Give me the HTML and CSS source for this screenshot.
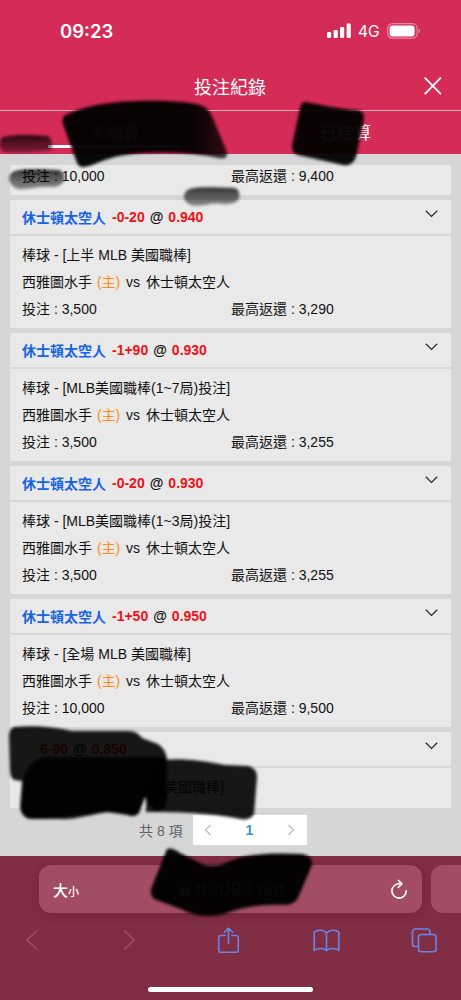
FILE: index.html
```
<!DOCTYPE html>
<html lang="zh-Hant">
<head>
    <meta charset="UTF-8">
    <meta name="viewport" content="width=device-width, initial-scale=1.0">
    <title>投注紀錄</title>
    <link rel="stylesheet" href="styles.css">
</head>
<body>
<div class="phone">
    <div class="status-bar">
        <span class="time">09:23</span>
        <div class="status-icons">
            <svg width="25" height="16" viewBox="0 0 25 16" fill="#fff">
                <rect x="0" y="9" width="4.2" height="6" rx="1.2"/>
                <rect x="6.6" y="7" width="4.2" height="8" rx="1.2"/>
                <rect x="13" y="4" width="4.2" height="11" rx="1.2"/>
                <rect x="19.6" y="0.5" width="4.2" height="14.5" rx="1.2"/>
            </svg>
            <span class="network">4G</span>
            <svg width="34" height="16" viewBox="0 0 34 16">
                <rect x="0.7" y="0.7" width="29.4" height="14.4" rx="4.6" fill="none" stroke="#fff" stroke-opacity="0.45" stroke-width="1.2"/>
                <rect x="2.6" y="2.6" width="25" height="10.8" rx="3" fill="#fff"/>
                <path d="M31.6 5.5c1.8.8 1.8 4 0 4.8z" fill="#fff" fill-opacity="0.5"/>
            </svg>
        </div>
    </div>

    <div class="header">
        <h1>投注紀錄</h1>
        <svg class="close" width="18" height="18" viewBox="0 0 18 18" stroke="#fff" stroke-width="1.8" stroke-linecap="round">
            <path d="M1.2 1.2L16.4 16.6M16.4 1.2L1.2 16.6"/>
        </svg>
    </div>

    <div class="tabs">
        <div class="tab active">未結算</div>
        <div class="tab">已結算</div>
    </div>

    <div class="content">
        <div class="card first">
            <div class="row"><span>投注 : 10,000</span><span>最高返還 : 9,400</span></div>
        </div>

        <div class="card">
            <div class="card-title"><b class="team">休士頓太空人</b><b class="red">-0-20</b><b class="at">@</b><b class="red">0.940</b>
                <svg class="chevron" width="13" height="8" viewBox="0 0 13 8"><path d="M0.8 0.8L6.5 6.4L12.2 0.8"/></svg>
            </div>
            <div class="card-body">
                <div class="row">棒球 - [上半 MLB 美國職棒]</div>
                <div class="row match">西雅圖水手 <span class="home">(主)</span> vs <span class="away">休士頓太空人</span></div>
                <div class="row"><span>投注 : 3,500</span><span>最高返還 : 3,290</span></div>
            </div>
        </div>

        <div class="card">
            <div class="card-title"><b class="team">休士頓太空人</b><b class="red">-1+90</b><b class="at">@</b><b class="red">0.930</b>
                <svg class="chevron" width="13" height="8" viewBox="0 0 13 8"><path d="M0.8 0.8L6.5 6.4L12.2 0.8"/></svg>
            </div>
            <div class="card-body">
                <div class="row">棒球 - [MLB美國職棒(1~7局)投注]</div>
                <div class="row match">西雅圖水手 <span class="home">(主)</span> vs <span class="away">休士頓太空人</span></div>
                <div class="row"><span>投注 : 3,500</span><span>最高返還 : 3,255</span></div>
            </div>
        </div>

        <div class="card">
            <div class="card-title"><b class="team">休士頓太空人</b><b class="red">-0-20</b><b class="at">@</b><b class="red">0.930</b>
                <svg class="chevron" width="13" height="8" viewBox="0 0 13 8"><path d="M0.8 0.8L6.5 6.4L12.2 0.8"/></svg>
            </div>
            <div class="card-body">
                <div class="row">棒球 - [MLB美國職棒(1~3局)投注]</div>
                <div class="row match">西雅圖水手 <span class="home">(主)</span> vs <span class="away">休士頓太空人</span></div>
                <div class="row"><span>投注 : 3,500</span><span>最高返還 : 3,255</span></div>
            </div>
        </div>

        <div class="card">
            <div class="card-title"><b class="team">休士頓太空人</b><b class="red">-1+50</b><b class="at">@</b><b class="red">0.950</b>
                <svg class="chevron" width="13" height="8" viewBox="0 0 13 8"><path d="M0.8 0.8L6.5 6.4L12.2 0.8"/></svg>
            </div>
            <div class="card-body">
                <div class="row">棒球 - [全場 MLB 美國職棒]</div>
                <div class="row match">西雅圖水手 <span class="home">(主)</span> vs <span class="away">休士頓太空人</span></div>
                <div class="row"><span>投注 : 10,000</span><span>最高返還 : 9,500</span></div>
            </div>
        </div>

        <div class="card last">
            <div class="card-title hidden-title"><b class="red">6-90</b><b class="at">@</b><b class="red">0.850</b>
                <svg class="chevron" width="13" height="8" viewBox="0 0 13 8"><path d="M0.8 0.8L6.5 6.4L12.2 0.8"/></svg>
            </div>
            <div class="card-body">
                <div class="row hidden-row">美國職棒]</div>
            </div>
        </div>

        <div class="pagination">
            <span class="total">共 8 項</span>
            <div class="pager">
                <svg width="8" height="12" viewBox="0 0 8 12"><path d="M6.5 1L1.5 6L6.5 11"/></svg>
                <span class="page">1</span>
                <svg width="8" height="12" viewBox="0 0 8 12"><path d="M1.5 1L6.5 6L1.5 11"/></svg>
            </div>
        </div>
    </div>

    <div class="browser-bar">
        <div class="address-row">
            <div class="address">
                <span class="text-size">大<small>小</small></span>
                <span class="url">
                    <svg width="10" height="13" viewBox="0 0 10 13"><rect x="0" y="5" width="10" height="8" rx="1.5" fill="#fff"/><path d="M2.2 5V3.4a2.8 2.8 0 0 1 5.6 0V5" fill="none" stroke="#fff" stroke-width="1.3"/></svg>
                    tf9099.net
                </span>
                <svg class="reload" width="18" height="21" viewBox="0 0 18 21" fill="none" stroke="#fff" stroke-width="1.6" stroke-linecap="round" stroke-linejoin="round">
                    <path d="M9.6 4.7A7.2 7.2 0 1 0 16.3 11.9"/>
                    <path d="M8.3 1.3L12 4.8L8.3 8.4"/>
                </svg>
            </div>
            <div class="next-address"></div>
        </div>
        <div class="toolbar">
            <svg class="off" height="20" viewBox="0 0 12 20"><path d="M11 1L1.2 10L11 19"/></svg>
            <svg class="off" height="20" viewBox="0 0 12 20"><path d="M1 1L10.8 10L1 19"/></svg>
            <svg height="27" viewBox="0 0 22 27">
                <path d="M7.5 8.5H3.5a2.3 2.3 0 0 0-2.3 2.3V23a2.3 2.3 0 0 0 2.3 2.3h15a2.3 2.3 0 0 0 2.3-2.3V10.8a2.3 2.3 0 0 0-2.3-2.3H14.5M11 16.5V1.2M6.8 5.3L11 1.2L15.2 5.3"/>
            </svg>
            <svg height="23" viewBox="0 0 27 23">
                <path d="M13.5 4C11 .8 4.5.3 1.2 3.2V21.5C4.5 18.8 11 18.8 13.5 21.5C16 18.8 22.5 18.8 25.8 21.5V3.2C22.5.3 16 .8 13.5 4zM13.5 4V21.5"/>
            </svg>
            <svg height="25" viewBox="0 0 26 25">
                <path d="M7 18.5H3.5a2.5 2.5 0 0 1-2.5-2.5V3.5A2.5 2.5 0 0 1 3.5 1h12.5a2.5 2.5 0 0 1 2.5 2.5V6.5"/>
                <rect x="7" y="6.5" width="17.5" height="17.3" rx="2.5"/>
            </svg>
        </div>
        <div class="home-indicator"></div>
    </div>

    <!-- marker strokes -->
    <svg class="marker" width="461" height="1000" viewBox="0 0 461 1000">
        <defs>
            <filter id="soft" x="-10%" y="-10%" width="120%" height="120%"><feGaussianBlur stdDeviation="1.5"/></filter>
            <linearGradient id="pen" x1="0" y1="0" x2="0" y2="1">
                <stop offset="0" stop-color="#000" stop-opacity="0.8"/>
                <stop offset="0.5" stop-color="#000" stop-opacity="0.58"/>
                <stop offset="1" stop-color="#000" stop-opacity="0.42"/>
            </linearGradient>
            <linearGradient id="fade" x1="0" y1="0" x2="1" y2="0">
                <stop offset="0" stop-color="#000" stop-opacity="0.96"/>
                <stop offset="0.8" stop-color="#000" stop-opacity="0.96"/>
                <stop offset="1" stop-color="#000" stop-opacity="0.75"/>
            </linearGradient>
        </defs>
        <g filter="url(#soft)">
            <path fill="url(#fade)" d="M64 116C80 107 105 102 137 101C165 100 188 102 200 105Q209 108 212 116L227 152Q228 160 219 158C190 152 155 151 125 155C105 158 93 166 84 167Q78 168 76 160L63 124Q62 119 64 116z"/>
            <path fill="#000" fill-opacity="0.95" d="M305 102C320 104 336 109 357 110Q365 111 364 119L356 157Q352 167 343 165L298 155Q292 153 292 146L300 108Q301 102 305 102z"/>
            <path fill="url(#pen)" d="M2 137C18 134 34 135 48 136Q53 139 52 150C38 152 18 153 4 152Q-4 146 2 137z"/>
            <path fill="url(#pen)" d="M15 171C28 168 48 170 59 170Q66 173 64 181Q60 187 52 187C38 186 27 190 18 189Q11 187 9 179Q10 172 15 171z"/>
            <path fill="url(#pen)" d="M190 189C200 186 222 188 235 188Q241 191 239 199Q235 205 222 204C210 202 200 208 191 205Q183 202 184 195Q186 190 190 189z"/>
            <path fill="#000" fill-opacity="0.9" d="M14 727C32 725 55 727 72 731H130Q138 732 142 738L158 744Q167 750 167 761V800Q166 812 156 811L145 797L139 813Q135 818 127 815L108 812C88 815 75 820 58 819H30Q21 817 20 807L22 781L14 780Q10 777 10 770L9 735Q10 728 14 727z"/>
            <path fill="#000" fill-opacity="0.9" d="M44 757H165V785L154 811L145 797L139 813Q135 817 127 814L106 812L50 818H29Q22 816 21 807L24 778Q29 760 44 757z"/>
            <path fill="#000" fill-opacity="0.9" d="M160 760C180 758 200 760 225 765L248 766Q257 768 257 777L254 814Q250 821 240 819C215 814 198 813 165 812H146V785z"/>
            <path fill="#000" fill-opacity="0.97" d="M167 849Q172 847 180 853L202 864Q215 868 228 862C248 853 275 853 302 854Q313 856 312 865L298 898Q294 905 285 905C265 904 240 907 225 914Q200 920 181 909L154 899Q150 895 151 889z"/>
        </g>
    </svg>
</div>
</body>
</html>
```

FILE: styles.css
```
* {
    box-sizing: border-box;
}

body {
    margin: 0;
    font-family: "Liberation Sans", "Noto Sans CJK TC", sans-serif;
    font-size: 14px;
    color: #111;
}

.phone {
    position: relative;
    width: 461px;
    height: 1000px;
    overflow: hidden;
    display: flex;
    flex-direction: column;
    background-color: #d6d6d6;
}

svg {
    display: block;
    flex-shrink: 0;
}

/* status bar */
.status-bar {
    height: 62px;
    padding: 0 40px 0 60px;
    display: flex;
    align-items: center;
    justify-content: space-between;
    background-color: #d52b57;
    color: #fff;
}

.time {
    font-family: Inter, sans-serif;
    font-size: 18.5px;
    font-weight: 600;
}

.status-icons {
    display: flex;
    align-items: center;
}

.network {
    width: 35px;
    padding-left: 6px;
    font-family: Inter, sans-serif;
    font-size: 15.5px;
}

/* header */
.header {
    height: 49px;
    padding: 0 19px 0 194px;
    display: flex;
    align-items: center;
    justify-content: space-between;
    background-color: #d52b57;
    border-bottom: 1px solid #f3a9bd;
    color: #fff;
}

.header h1 {
    margin: 0;
    font-size: 18px;
    font-weight: normal;
}

.tabs {
    height: 43px;
    display: flex;
    background-color: #d52b57;
    color: #fff;
    font-size: 17px;
}

.tab {
    width: 50%;
    display: flex;
    align-items: center;
    justify-content: center;
    border-bottom: 2px solid #d52b57;
}

.tab.active::after {
    content: "";
    position: absolute;
    top: 145px;
    left: 48px;
    width: 135px;
    height: 3px;
    background-color: #fff;
}

/* bet list */
.content {
    height: 702px;
    padding: 11px 10px 0 10px;
}

.card {
    height: 128px;
    margin-bottom: 5px;
    background-color: #e9e9e9;
}

.card.first {
    height: 30px;
    padding-left: 12px;
}

.card.last {
    height: 76px;
    margin-bottom: 0;
}

.card-title {
    height: 36px;
    padding: 0 13px 0 12px;
    display: flex;
    align-items: center;
    border-bottom: 2px solid #d8d8d8;
}

.team {
    width: 90px;
    color: #1763e5;
}

.red {
    color: #f01018;
}

.at {
    margin: 0 5px;
}

.chevron {
    margin-left: auto;
    margin-bottom: 7px;
    fill: none;
    stroke: #222;
    stroke-width: 1.2;
}

.card-body {
    padding: 6px 0 0 12px;
}

.row {
    height: 27px;
    line-height: 27px;
    display: flex;
    white-space: pre;
}

.row span:first-child:not(.home) {
    width: 209px;
}

.card.first .row {
    height: 22px;
    line-height: 22px;
}

.home {
    margin: 0 2px 0 1px;
    color: #ff8c1a;
}

.row.match .away {
    margin-left: 2px;
}

.hidden-title {
    padding-left: 30px;
}

.hidden-row {
    padding-left: 142px;
}

.pagination {
    height: 44px;
    padding-left: 129px;
    display: flex;
    align-items: center;
}

.total {
    width: 54px;
    color: #606266;
    white-space: nowrap;
}

.pager {
    width: 114px;
    height: 30px;
    padding: 0 12px 0 11px;
    display: flex;
    align-items: center;
    justify-content: space-between;
    background-color: #fff;
}

.pager svg {
    fill: none;
    stroke: #b4b8be;
    stroke-width: 1.1;
}

.page {
    color: #3f92dc;
    font-weight: bold;
}

/* safari bottom bar */
.browser-bar {
    height: 144px;
    padding-top: 9px;
    background-color: #812d43;
    overflow: hidden;
}

.address-row {
    display: flex;
    gap: 9px;
    padding-left: 39px;
}

.address {
    width: 383px;
    height: 48px;
    flex-shrink: 0;
    padding: 0 14px;
    display: flex;
    align-items: center;
    justify-content: space-between;
    border-radius: 12px;
    background-color: #a24d64;
    box-shadow: 0 2px 10px rgba(60, 10, 25, 0.2);
    color: #fff;
}

.text-size {
    width: 127px;
    font-size: 15px;
    font-weight: 500;
}

.text-size small {
    font-size: 11px;
}

.url {
    display: flex;
    align-items: center;
    gap: 6px;
    margin-right: auto;
    font-family: Inter, sans-serif;
    font-size: 18px;
}

.next-address {
    width: 60px;
    height: 48px;
    flex-shrink: 0;
    border-radius: 12px;
    background-color: #a24d64;
}

.toolbar {
    height: 54px;
    padding: 0 23px 0 18px;
    display: flex;
    align-items: center;
    justify-content: space-between;
}

.toolbar svg {
    width: 27px;
    fill: none;
    stroke: #6885e8;
    stroke-width: 1.6;
    stroke-linecap: round;
    stroke-linejoin: round;
}

.toolbar svg.off {
    stroke: #a14d65;
}

.home-indicator {
    width: 165px;
    height: 5px;
    margin: 20px 0 0 148px;
    border-radius: 3px;
    background-color: #fff;
}

.marker {
    position: absolute;
    top: 0;
    left: 0;
}
```
